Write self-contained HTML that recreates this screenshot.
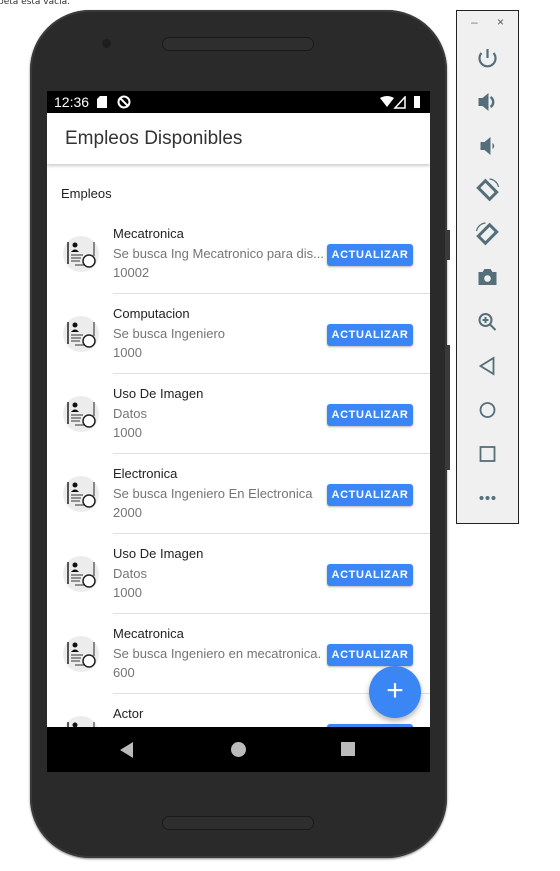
<!DOCTYPE html>
<html><head><meta charset="utf-8"><style>
*{margin:0;padding:0;box-sizing:border-box}
body{width:560px;height:871px;background:#fff;position:relative;overflow:hidden;font-family:"Liberation Sans",Roboto,sans-serif}
.top{position:absolute;left:-2px;top:-3px;font-size:9px;color:#333;font-family:"DejaVu Sans",sans-serif}
.phone{position:absolute;left:30px;top:10px;width:417px;height:848px;background:#2a2a2a;border-radius:60px;box-shadow:inset 0 0 0 2px #3a3a3a, 0 1px 2px #888}
.btnside{position:absolute;background:#3a3a3a;width:4px;left:446px}
.speaker{position:absolute;left:162px;width:152px;height:14px;border-radius:7px;background:#2e2e2e;border:1px solid #1a1a1a}
.cam{position:absolute;left:102px;top:39px;width:9px;height:9px;border-radius:50%;background:#1e1e1e}
.screen{position:absolute;left:47px;top:91px;width:383px;height:681px;background:#fff;overflow:hidden}
.status{height:22px;background:#000;color:#fff;font-size:14px;padding-left:7px;line-height:22px;position:relative}
.appbar{height:51px;background:#fff;box-shadow:0 2px 3px rgba(0,0,0,.2);position:relative;z-index:2;font-size:19px;color:#333;padding-left:18px;line-height:52px;font-weight:500}
.sect{font-size:13px;color:#222;padding:22px 0 0 14px;height:50px}
.row{height:80px;position:relative}
.row .line{position:absolute;left:66px;right:0;bottom:0;height:1px;background:#e0e0e0}
.av{position:absolute;left:16px;top:22px;width:36px;height:36px;border-radius:50%;background:#ececec;overflow:hidden}
.t{position:absolute;left:66px;top:10px;font-size:13px;color:#222;line-height:19.5px}
.t div:nth-child(2),.t div:nth-child(3){color:#757575}
.b{position:absolute;left:280px;top:30px;width:86px;height:22px;background:#3a86f5;color:#fff;font-size:11px;font-weight:bold;letter-spacing:.6px;text-align:center;line-height:22px;border-radius:3px;box-shadow:0 1px 2px rgba(0,0,0,.3)}
.nav{position:absolute;left:0;top:636px;width:383px;height:45px;background:#000;z-index:3}
.fab{position:absolute;left:322px;top:575px;width:52px;height:52px;border-radius:50%;background:#3a86f5;color:#fff;font-size:30px;text-align:center;line-height:50px;box-shadow:0 3px 6px rgba(0,0,0,.3);z-index:4;font-weight:300}
.panel{position:absolute;left:456px;top:10px;width:63px;height:514px;background:#f0f0f0;border:1px solid #222}
.ic{position:absolute;left:0;width:61px;text-align:center}
</style></head><body>
<div class="top">peta esta vacia.</div>
<div class="phone"></div>
<div class="btnside" style="top:230px;height:30px"></div>
<div class="btnside" style="top:345px;height:125px"></div>
<div class="cam"></div>
<div class="speaker" style="top:37px"></div>
<div class="speaker" style="top:816px"></div>
<div class="screen">
 <div class="status">12:36
  <svg style="position:absolute;left:50px;top:5px" width="11" height="12"><path d="M3 0h7v12H0V3z" fill="#fff"/></svg>
  <svg style="position:absolute;left:70px;top:4px" width="14" height="14"><circle cx="7" cy="7" r="5.5" stroke="#fff" stroke-width="2" fill="none"/><path d="M3 3l8 8" stroke="#fff" stroke-width="2"/></svg>
  <svg style="position:absolute;left:333px;top:5px" width="42" height="13"><path d="M0 2 Q7 -2 14 2 L7 11z" fill="#fff"/><path d="M25 1v11H15z" fill="none" stroke="#fff" stroke-width="1.5"/><rect x="34" y="0" width="6" height="12" fill="#fff"/></svg>
 </div>
 <div class="appbar">Empleos Disponibles</div>
 <div class="sect">Empleos</div>
 <div id="list"></div>
 <div class="fab">+</div>
 <div class="nav">
  <svg style="position:absolute;left:72px;top:15px" width="16" height="16"><path d="M14 0v16L1 8z" fill="#bbb"/></svg>
  <div style="position:absolute;left:184px;top:15px;width:15px;height:15px;border-radius:50%;background:#bbb"></div>
  <div style="position:absolute;left:294px;top:15px;width:14px;height:14px;background:#bbb"></div>
 </div>
</div>
<div class="panel">
 <div style="position:absolute;left:14px;top:4px;font-size:12px;color:#777">–</div>
 <div style="position:absolute;left:40px;top:4px;font-size:12px;color:#555">×</div>
 <svg class="ic" style="top:36px" height="22" viewBox="-30.5 -11 61 22"><path d="M-6 -5 A8 8 0 1 0 6 -5" stroke="#546e7a" stroke-width="2.2" fill="none"/><path d="M0 -9v9" stroke="#546e7a" stroke-width="2.2"/></svg>
 <svg class="ic" style="top:80px" height="22" viewBox="-30.5 -11 61 22"><path d="M-9 -4h4l6-5v18l-6-5h-4z" fill="#546e7a"/><path d="M3 -5a6 6 0 0 1 0 10" stroke="#546e7a" stroke-width="2.5" fill="none"/></svg>
 <svg class="ic" style="top:124px" height="22" viewBox="-30.5 -11 61 22"><path d="M-7 -4h4l6-5v18l-6-5h-4z" fill="#546e7a"/><path d="M5 -3a3.5 3.5 0 0 1 0 6z" fill="#546e7a"/></svg>
 <svg class="ic" style="top:166px" height="26" viewBox="-30.5 -13 61 26"><rect x="-5" y="-8" width="10" height="16" transform="rotate(-45)" fill="none" stroke="#546e7a" stroke-width="3"/><path d="M2 -11a10 10 0 0 1 9 8" stroke="#546e7a" stroke-width="1.2" fill="none"/></svg>
 <svg class="ic" style="top:210px" height="26" viewBox="-30.5 -13 61 26"><rect x="-5" y="-8" width="10" height="16" transform="rotate(45)" fill="none" stroke="#546e7a" stroke-width="3"/><path d="M-2 -11a10 10 0 0 0 -9 8" stroke="#546e7a" stroke-width="1.2" fill="none"/></svg>
 <svg class="ic" style="top:256px" height="20" viewBox="-30.5 -10 61 20"><path d="M-9 -5h4l2-3h6l2 3h4v13h-18z" fill="#546e7a"/><circle cx="0" cy="1.5" r="3.3" fill="#f0f0f0"/></svg>
 <svg class="ic" style="top:300px" height="22" viewBox="-30.5 -11 61 22"><circle cx="-2" cy="-2" r="6" stroke="#546e7a" stroke-width="2" fill="none"/><path d="M2 2l6 6M-2 -5v6M-5 -2h6" stroke="#546e7a" stroke-width="2"/></svg>
 <svg class="ic" style="top:345px" height="20" viewBox="-30.5 -10 61 20"><path d="M6 -8v16L-7 0z" stroke="#546e7a" stroke-width="1.8" fill="none"/></svg>
 <svg class="ic" style="top:389px" height="20" viewBox="-30.5 -10 61 20"><circle r="7" stroke="#546e7a" stroke-width="1.8" fill="none"/></svg>
 <svg class="ic" style="top:433px" height="20" viewBox="-30.5 -10 61 20"><rect x="-7" y="-7" width="14" height="14" stroke="#546e7a" stroke-width="1.8" fill="none"/></svg>
 <svg class="ic" style="top:482px" height="10" viewBox="-30.5 -5 61 10"><circle cx="-6" r="2" fill="#546e7a"/><circle r="2" fill="#546e7a"/><circle cx="6" r="2" fill="#546e7a"/></svg>
</div>
<script>
var d=[["Mecatronica","Se busca Ing Mecatronico para dis...","10002"],["Computacion","Se busca Ingeniero","1000"],["Uso De Imagen","Datos","1000"],["Electronica","Se busca Ingeniero En Electronica","2000"],["Uso De Imagen","Datos","1000"],["Mecatronica","Se busca Ingeniero en mecatronica.","600"],["Actor","",""]];
var av='<div class="av"><svg width="36" height="36"><path d="M5 6v22" stroke="#222" stroke-width="1.5"/><path d="M31 6v14" stroke="#222" stroke-width="1"/><circle cx="12" cy="9" r="2.5" fill="#111"/><path d="M8 16q4-5 8 0z" fill="#111"/><path d="M8 19h12M8 22h10M8 25h9M12 29h10" stroke="#333" stroke-width="1"/><circle cx="26" cy="25" r="6" stroke="#222" stroke-width="1.5" fill="#fff"/></svg></div>';
var h='';d.forEach(function(r){h+='<div class="row">'+av+'<div class="t"><div>'+r[0]+'</div><div>'+r[1]+'</div><div>'+r[2]+'</div></div><div class="b">ACTUALIZAR</div><div class="line"></div></div>'});
document.getElementById('list').innerHTML=h;
</script>
</body></html>
